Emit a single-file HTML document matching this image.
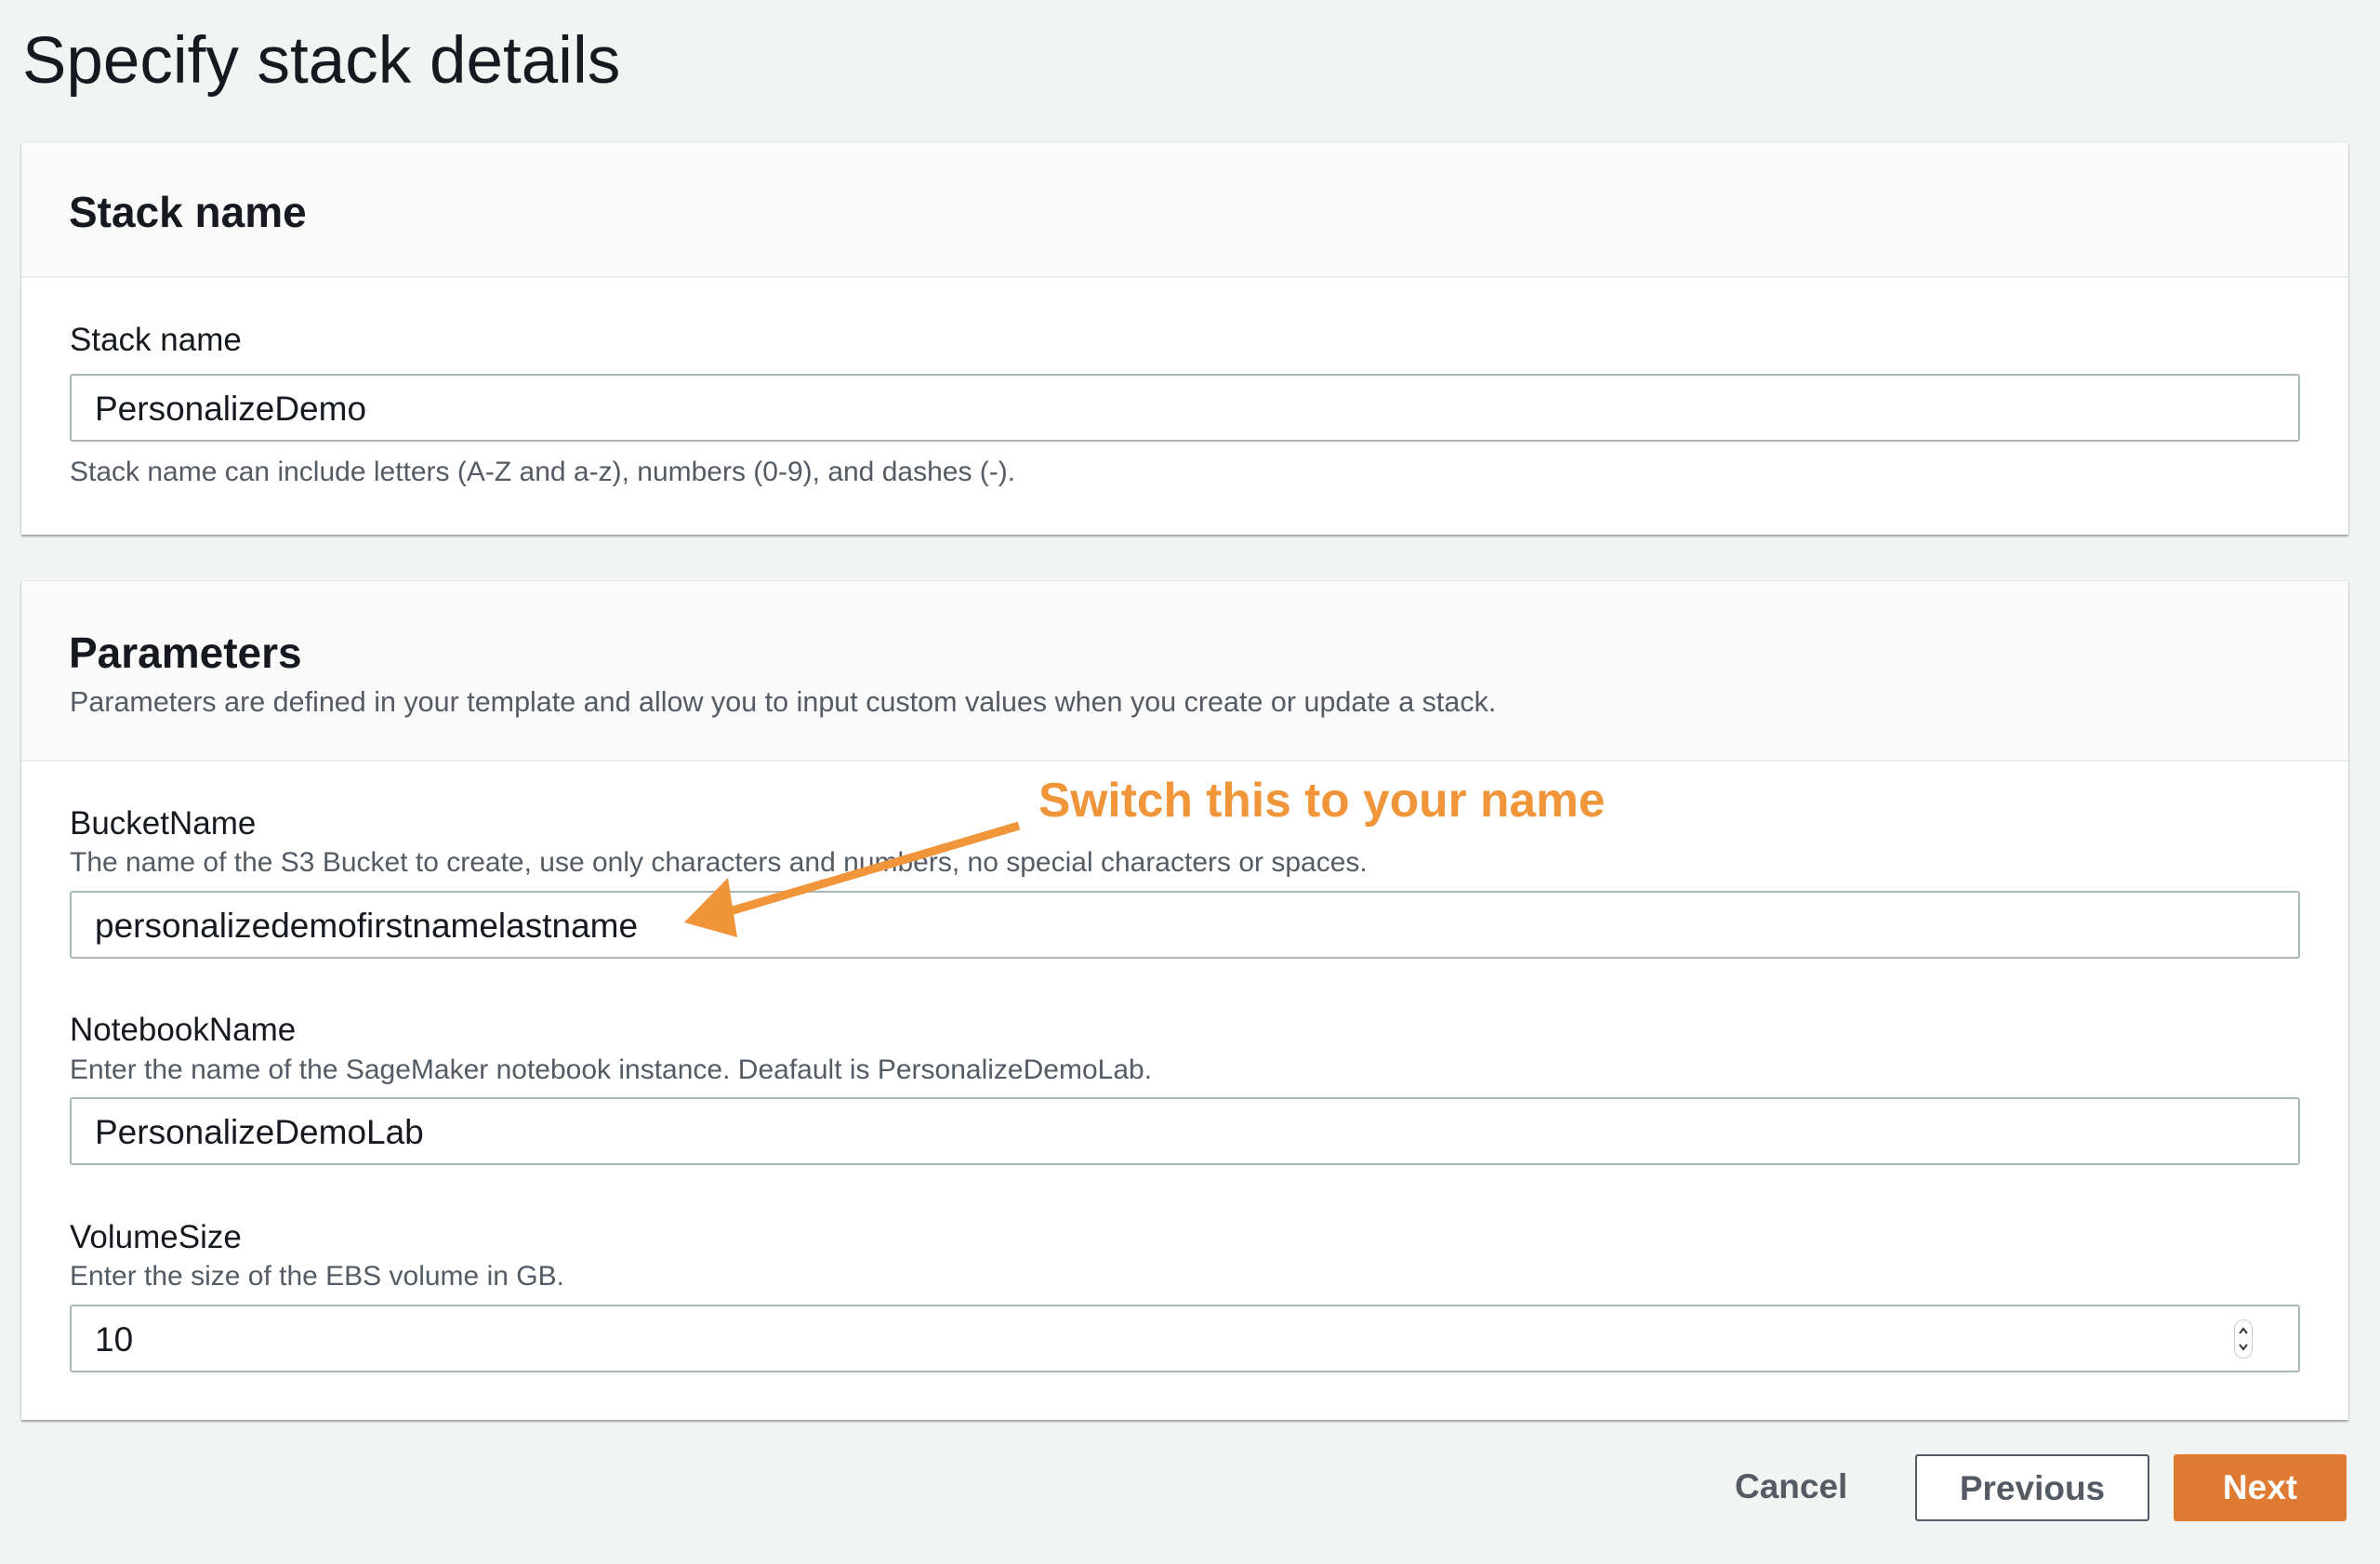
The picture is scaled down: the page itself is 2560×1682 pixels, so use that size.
<!DOCTYPE html>
<html><head><meta charset="utf-8"><style>
*{margin:0;padding:0;box-sizing:border-box}
body{width:2560px;height:1682px;background:#f2f3f3;font-family:"Liberation Sans",sans-serif;color:#16191f;position:relative;overflow:hidden}
.a{position:absolute;white-space:nowrap}
.panel{position:absolute;left:23px;width:2503px;background:#fff;box-shadow:0 2px 2px rgba(0,28,36,.35),0 0 1px rgba(0,28,36,.25)}
.hdr{position:absolute;left:0;top:0;width:100%;background:#fafafa;border-bottom:2px solid #eaeded}
.inp{position:absolute;left:75px;width:2399px;height:73px;border:2px solid #aab7b8;border-radius:3px;background:#fff;font-size:37px;padding-left:25px;line-height:71px;color:#16191f}
.lbl{font-size:35px;color:#16191f}
.hint{font-size:30px;color:#545b64}
</style></head><body>
<div class="a" style="left:24px;top:24px;font-size:71px;line-height:84px">Specify stack details</div>

<div class="panel" style="top:153px;height:422px">
 <div class="hdr" style="height:146px"></div>
</div>
<div class="a" style="left:74px;top:201px;font-size:46px;font-weight:bold">Stack name</div>
<div class="a lbl" style="left:75px;top:346px">Stack name</div>
<div class="inp" style="top:402px">PersonalizeDemo</div>
<div class="a hint" style="left:75px;top:491px">Stack name can include letters (A-Z and a-z), numbers (0-9), and dashes (-).</div>

<div class="panel" style="top:625px;height:902px">
 <div class="hdr" style="height:194px"></div>
</div>
<div class="a" style="left:74px;top:675px;font-size:46px;font-weight:bold">Parameters</div>
<div class="a hint" style="left:75px;top:738px;font-size:30.5px">Parameters are defined in your template and allow you to input custom values when you create or update a stack.</div>

<div class="a lbl" style="left:75px;top:866px">BucketName</div>
<div class="a hint" style="left:75px;top:911px">The name of the S3 Bucket to create, use only characters and numbers, no special characters or spaces.</div>
<div class="inp" style="top:958px">personalizedemofirstnamelastname</div>

<div class="a lbl" style="left:75px;top:1088px">NotebookName</div>
<div class="a hint" style="left:75px;top:1134px">Enter the name of the SageMaker notebook instance. Deafault is PersonalizeDemoLab.</div>
<div class="inp" style="top:1180px">PersonalizeDemoLab</div>

<div class="a lbl" style="left:75px;top:1311px">VolumeSize</div>
<div class="a hint" style="left:75px;top:1356px">Enter the size of the EBS volume in GB.</div>
<div class="inp" style="top:1403px">10</div>
<div class="a" style="left:2403px;top:1419px;width:20px;height:42px;border:1px solid #ccc;border-radius:10px;background:#fff"></div>
<svg class="a" style="left:2403px;top:1419px" width="20" height="42"><path d="M6 15 L10 10 L14 15 M6 27 L10 32 L14 27" stroke="#333" stroke-width="2" fill="none"/></svg>

<div class="a" style="left:1117px;top:830px;font-size:51.5px;font-weight:bold;color:#f0953a">Switch this to your name</div>
<svg class="a" style="left:0;top:0" width="2560" height="1682">
<line x1="1096" y1="888" x2="775" y2="983" stroke="#f0953a" stroke-width="9"/>
<polygon points="736,992 783,944 793,1008" fill="#f0953a"/>
</svg>

<div class="a" style="left:1866px;top:1578px;font-size:37px;font-weight:bold;color:#545b64">Cancel</div>
<div class="a" style="left:2060px;top:1564px;width:252px;height:72px;border:2px solid #545b64;border-radius:3px;background:#fff;font-size:37px;font-weight:bold;color:#545b64;text-align:center;line-height:70px">Previous</div>
<div class="a" style="left:2338px;top:1564px;width:186px;height:72px;border-radius:3px;background:#df7a33;font-size:37px;font-weight:bold;color:#fff;text-align:center;line-height:72px">Next</div>
</body></html>
